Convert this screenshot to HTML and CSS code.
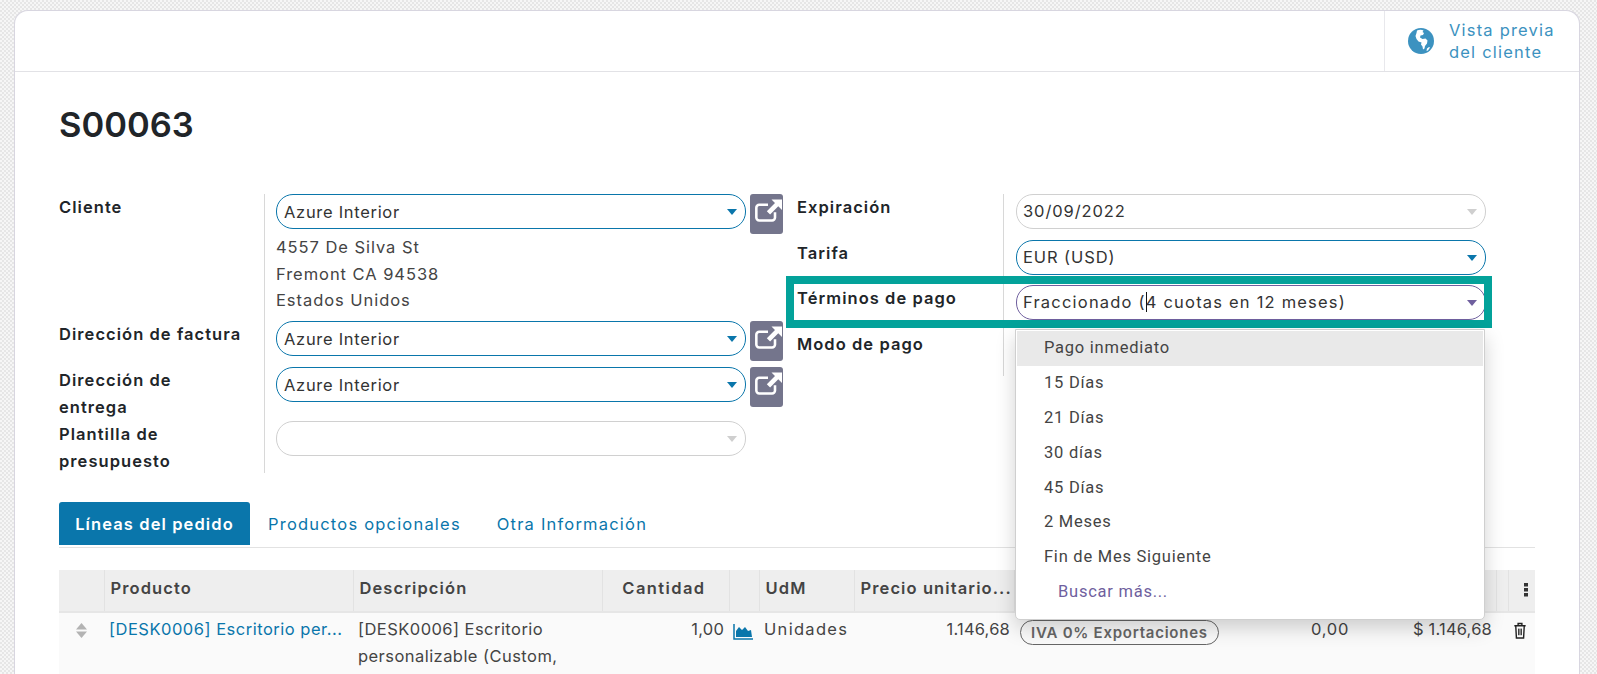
FILE: index.html
```html
<!DOCTYPE html><html lang="es">
<head>
  <meta charset="UTF-8">
  <title>S00063 - Presupuesto</title>
  <meta name="viewport" content="width=device-width, initial-scale=1">
  <link rel="stylesheet" href="styles.css">
</head>
<body>
<div class="sheet">
  <div class="topbar">
    <a class="preview">
      <svg class="globe" viewBox="0 0 26 26">
        <circle cx="13" cy="13" r="13" fill="#3c92c0"/>
        <path d="M9 2.500c2-1 5-1 6.500 0l-1 1.500 1.500 1-1 2-2.500.5-.5 2 2.500 1.500 3-.5 2 2-.5 3-2 2.500-.5 2.500-1.500 1-.5-3-1.500-2 .5-2-3-1-2-2.500-1-3 1-3z" fill="#fff"/>
        <path d="M19 20.500l2-1.500 1 .5-2 3-1.500.5z" fill="#fff"/>
      </svg>
      <span>Vista previa<br>del cliente</span>
    </a>
  </div>

  <div class="form">
    <h1>S00063</h1>

    <div class="groups">
      <div class="group left">
        <label class="lbl">Cliente</label>
        <div class="val">
          <div class="line">
            <div class="m2o">Azure Interior</div>
            <a class="ext"><svg viewBox="0 0 24 24"><path d="M18 14v4.500a2.500 2.500 0 0 1-2.500 2.500H4.500A2.500 2.500 0 0 1 2 18.500V10a2.500 2.500 0 0 1 2.500-2.500H12" fill="none" stroke="#fff" stroke-width="2.200"/><path d="M15 3h9v9l-3.200-3.200-7 7-2.800-2.800 7-7z" fill="#fff"/></svg></a>
          </div>
          <div class="addr">4557 De Silva St<br>Fremont CA 94538<br>Estados Unidos</div>
        </div>
        <label class="lbl">Dirección de factura</label>
        <div class="val">
          <div class="line">
            <div class="m2o">Azure Interior</div>
            <a class="ext"><svg viewBox="0 0 24 24"><path d="M18 14v4.500a2.500 2.500 0 0 1-2.500 2.500H4.500A2.500 2.500 0 0 1 2 18.500V10a2.500 2.500 0 0 1 2.500-2.500H12" fill="none" stroke="#fff" stroke-width="2.200"/><path d="M15 3h9v9l-3.200-3.200-7 7-2.800-2.800 7-7z" fill="#fff"/></svg></a>
          </div>
        </div>
        <label class="lbl">Dirección de<br>entrega</label>
        <div class="val">
          <div class="line">
            <div class="m2o">Azure Interior</div>
            <a class="ext"><svg viewBox="0 0 24 24"><path d="M18 14v4.500a2.500 2.500 0 0 1-2.500 2.500H4.500A2.500 2.500 0 0 1 2 18.500V10a2.500 2.500 0 0 1 2.500-2.500H12" fill="none" stroke="#fff" stroke-width="2.200"/><path d="M15 3h9v9l-3.200-3.200-7 7-2.800-2.800 7-7z" fill="#fff"/></svg></a>
          </div>
        </div>
        <label class="lbl">Plantilla de<br>presupuesto</label>
        <div class="val">
          <div class="m2o off"></div>
        </div>
      </div>

      <div class="group right">
        <div class="frame"></div>
        <label class="lbl">Expiración</label>
        <div class="val"><div class="m2o off date">30/09/2022</div></div>
        <label class="lbl">Tarifa</label>
        <div class="val"><div class="m2o date">EUR (USD)</div></div>
        <label class="lbl">Términos de pago</label>
        <div class="val">
          <div class="m2o date focus">Fraccionado (<span class="cursor"></span>4 cuotas en 12 meses)</div>
          <ul class="drop">
            <li class="hover">Pago inmediato</li>
            <li>15 Días</li>
            <li>21 Días</li>
            <li>30 días</li>
            <li>45 Días</li>
            <li>2 Meses</li>
            <li>Fin de Mes Siguiente</li>
            <li class="more">Buscar más...</li>
          </ul>
        </div>
        <label class="lbl">Modo de pago</label>
        <div class="val"></div>
      </div>
    </div>

    <div class="tabs">
      <a class="tab active">Líneas del pedido</a>
      <a class="tab">Productos opcionales</a>
      <a class="tab">Otra Información</a>
    </div>

    <table class="lines">
      <colgroup>
        <col class="c-h"><col class="c-prod"><col class="c-desc"><col class="c-qty"><col class="c-ic"><col class="c-uom"><col class="c-price"><col class="c-tax"><col class="c-sub"><col class="c-x"><col class="c-opt">
      </colgroup>
      <thead>
        <tr>
          <th></th>
          <th>Producto</th>
          <th>Descripción</th>
          <th class="num qty-h">Cantidad</th>
          <th></th>
          <th>UdM</th>
          <th>Precio unitario...</th>
          <th></th>
          <th></th>
          <th></th>
          <th class="dots"><svg viewBox="0 0 4 14" width="4" height="14"><rect y="0" width="4" height="3.500" fill="#333"/><rect y="5" width="4" height="3.500" fill="#333"/><rect y="10" width="4" height="3.500" fill="#333"/></svg></th>
        </tr>
      </thead>
      <tbody>
        <tr>
          <td class="handle"><svg viewBox="0 0 11 15" width="11" height="15"><path d="M5.500 0l5.500 6.500H0z" fill="#b3b3b3"/><path d="M5.500 15l5.500-6.500H0z" fill="#b3b3b3"/></svg></td>
          <td class="link">[DESK0006] Escritorio per...</td>
          <td class="wrap">[DESK0006] Escritorio personalizable (Custom, Blanco)</td>
          <td class="num qty">1,00</td>
          <td class="ic"><svg viewBox="0 0 20 16" width="20" height="16"><path d="M1 0v15h19" fill="none" stroke="#0a76ab" stroke-width="1.500"/><path d="M3 13V7l3-4 3 3 3-3 3 4 3-1 1 7z" fill="#0a76ab"/></svg></td>
          <td class="uom">Unidades</td>
          <td class="num price">1.146,68</td>
          <td class="taxes"><span class="badge">IVA 0% Exportaciones</span><span class="disc">0,00</span></td>
          <td class="num total">$ 1.146,68</td>
          <td colspan="2" class="trash"><svg viewBox="0 0 14 18" width="14" height="17"><path d="M1 4h12M5 4V1.500h4V4M2.500 4l.7 13h7.600l.7-13" fill="none" stroke="#222" stroke-width="1.500"/><path d="M5.500 7v7M7 7v7M8.500 7v7" stroke="#222" stroke-width="1"/></svg></td>
        </tr>
      </tbody>
    </table>
  </div>
</div>
</body>
  </html>
```

FILE: styles.css
```css
html, body {
  margin: 0;
  height: 674px;
  overflow: hidden;
}
body {
  font-family: "Inter", "Noto Sans", sans-serif;
  font-size: 16.500px;
  color: #333;
  padding-top: 10px;
  box-sizing: border-box;
  background-color: #f0f0f0;
  background-image: repeating-conic-gradient(#e6e6e6 0 25%, #f6f6f6 0 50%);
  background-size: 4px 4px;
}
.sheet {
  margin-left: 14px;
  width: 1566px;
  height: 700px;
  box-sizing: border-box;
  background: white;
  border: 1px solid #d8d6e0;
  border-bottom: none;
  border-radius: 14px 14px 0 0;
}
.topbar {
  display: flex;
  justify-content: flex-end;
  height: 60px;
  border-bottom: 1px solid #e2e2e6;
}
.preview {
  display: flex;
  align-items: center;
  gap: 15px;
  width: 195px;
  box-sizing: border-box;
  padding-left: 23px;
  border-left: 1px solid #e8e8ec;
  color: #3c92c0;
  font-size: 16.500px;
  line-height: 22px;
  letter-spacing: 1.2px;
}
.globe {
  width: 26px;
  height: 26px;
  flex: none;
}

.form {
  padding: 0 44px;
}
h1 {
  margin: 0;
  padding-top: 31px;
  height: 92px;
  box-sizing: border-box;
  font-size: 34.500px;
  line-height: 44px;
  font-weight: 600;
  color: #212529;
}
.groups {
  display: flex;
  gap: 15px;
  margin-top: 30px;
}
.group {
  display: grid;
  position: relative;
}
.left {
  width: 723px;
  grid-template-columns: 205px 518px;
  grid-template-rows: 127px 46px 54px 52px;
}
.right {
  width: 689px;
  grid-template-columns: 206px 483px;
  grid-template-rows: 46px 45px 46px 45px;
  align-self: start;
}
.lbl {
  font-weight: 600;
  font-size: 16.500px;
  line-height: 26.500px;
  letter-spacing: 1.050px;
  color: #212529;
  white-space: nowrap;
}
.val {
  border-left: 1px solid #d8d8d8;
  padding-left: 12px;
  position: relative;
}
.left .val {
  padding-left: 11px;
}
.line {
  display: flex;
  gap: 4px;
}
.m2o {
  width: 470px;
  height: 35px;
  box-sizing: border-box;
  flex: none;
  border: 1px solid #0a76ab;
  border-radius: 17px;
  padding-left: 7px;
  line-height: 33px;
  color: #333;
  white-space: nowrap;
  position: relative;
  letter-spacing: 0.7px;
}
.line .m2o {
  line-height: 34px;
}
.m2o::after {
  content: "";
  position: absolute;
  right: 8px;
  top: 14px;
  border-left: 5px solid transparent;
  border-right: 5px solid transparent;
  border-top: 6px solid #0a76ab;
}
.m2o.date {
  padding-left: 6px;
  letter-spacing: 0.9px;
}
.m2o.off {
  border-color: #d0d0d0;
}
.m2o.off::after {
  border-top-color: #cfcfcf;
}
.m2o.focus {
  border-color: #6f5f9e;
  letter-spacing: 1.2px;
}
.m2o.focus::after {
  border-top-color: #6f5f9e;
}
.cursor {
  display: inline-block;
  width: 1px;
  height: 20px;
  margin-right: -1px;
  vertical-align: -4px;
  background: #111;
}
.ext {
  display: block;
  width: 33px;
  height: 40px;
  background: #74758c;
  border-radius: 3px;
  flex: none;
}
.ext svg {
  display: block;
  width: 28px;
  height: 28px;
  margin: 2px 0 0 4px;
}
.addr {
  line-height: 26.500px;
  color: #444;
  letter-spacing: 0.95px;
}
.frame {
  position: absolute;
  left: -11px;
  top: 82px;
  width: 706px;
  height: 52px;
  box-sizing: border-box;
  border: 8px solid #03a29a;
  z-index: 2;
}
.drop {
  position: absolute;
  left: 11px;
  top: 44px;
  width: 470px;
  height: 291px;
  box-sizing: border-box;
  margin: 0;
  padding: 1px;
  list-style: none;
  background: white;
  border: 1px solid #cfcfcf;
  border-radius: 0 0 5px 5px;
  box-shadow: 0 8px 20px rgba(0,0,0,0.18);
  z-index: 3;
  font-family: "Roboto", "Liberation Sans", sans-serif;
  letter-spacing: 0.75px;
  color: #444;
}
.drop li {
  height: 34.900px;
  line-height: 34.900px;
  padding-left: 27px;
}
.drop .hover {
  background: #e9e9e9;
}
.drop .more {
  padding-left: 41px;
  color: #6f5f9e;
}

.tabs {
  display: flex;
  margin-top: 29px;
  height: 45px;
  border-bottom: 1px solid #e2e2e2;
  color: #0a76ab;
  align-items: flex-start;
}
.tab {
  height: 43px;
  line-height: 44px;
  padding: 0 18px;
  letter-spacing: 1.2px;
}
.tab.active {
  background: #0a76ab;
  color: white;
  font-weight: 600;
  border-radius: 3px 3px 0 0;
  width: 191px;
  padding: 0;
  text-align: center;
  letter-spacing: 1.1px;
}
.lines {
  width: 1476px;
  margin-top: 22px;
  border-collapse: collapse;
  table-layout: fixed;
}
.c-h { width: 45px; }
.c-prod { width: 249px; }
.c-desc { width: 249px; }
.c-qty { width: 127px; }
.c-ic { width: 30px; }
.c-uom { width: 95px; }
.c-price { width: 160px; }
.c-tax { width: 341px; }
.c-sub { width: 141px; }
.c-x { width: 12px; }
.c-opt { width: 27px; }
.lines th {
  height: 42px;
  padding: 0 6px 5px;
  background: #eeeeee;
  border-left: 1px solid #e2e2e2;
  border-bottom: 2px solid #e6e6e6;
  box-sizing: border-box;
  text-align: left;
  font-weight: 600;
  letter-spacing: 1.100px;
  color: #444;
  white-space: nowrap;
  overflow: hidden;
}
.lines th:first-child {
  border-left: none;
}
.lines td {
  padding: 3px 6px 0;
  height: 100px;
  vertical-align: top;
  background: #fafafa;
  line-height: 27px;
  color: #444;
  letter-spacing: 0.7px;
  white-space: nowrap;
}
.lines td.num {
  letter-spacing: 0.2px;
}
.lines .num {
  text-align: right;
}
.lines .qty-h {
  padding-right: 23px;
  letter-spacing: 1.400px;
}
.lines .qty {
  padding-right: 5px;
}
.lines .price {
  padding-right: 4px;
}
.lines .link {
  color: #0a76ab;
  overflow: hidden;
  padding-left: 5px;
  letter-spacing: 0.5px;
}
.lines .wrap {
  white-space: normal;
  padding-left: 5px;
  letter-spacing: 0.45px;
}
.lines .uom {
  letter-spacing: 1.300px;
  padding-left: 5px;
}
.lines .total {
  padding-right: 4px;
}
.lines .handle {
  text-align: center;
}
.handle svg {
  margin: 7px 0 0 0;
}
.lines .ic {
  padding: 8px 0 0 4px;
}
.lines .dots {
  text-align: right;
  padding: 0 7px 0 0;
}
.taxes {
  display: flex;
  justify-content: space-between;
}
.badge {
  display: inline-block;
  height: 25px;
  box-sizing: border-box;
  border: 1px solid #666;
  border-radius: 13px;
  padding: 0 10px;
  font-size: 15px;
  font-weight: 600;
  letter-spacing: 0.75px;
  line-height: 24px;
  color: #666;
  margin-top: 4px;
}
.lines .trash {
  padding: 7px 0 0 17px;
}
```
